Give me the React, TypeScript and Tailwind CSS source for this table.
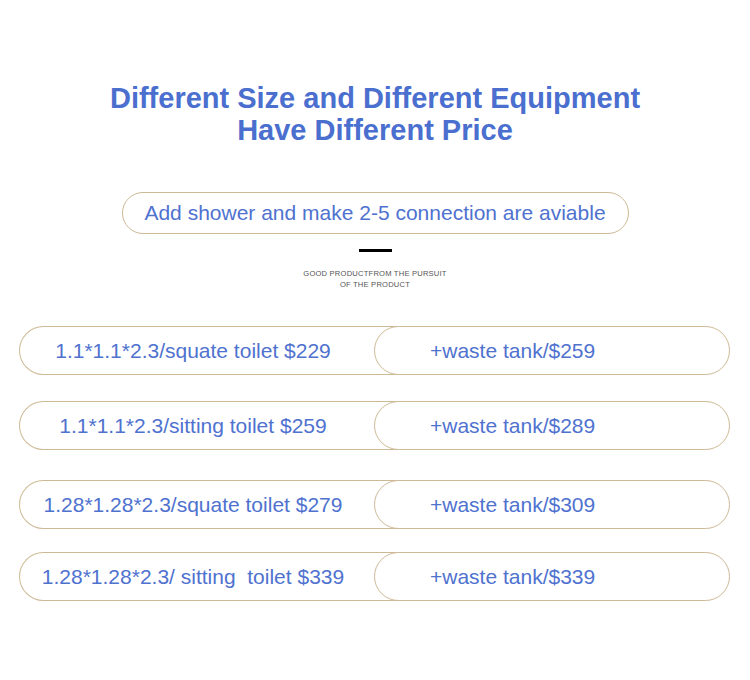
import React from "react";

const rows = [
  { left: "1.1*1.1*2.3/squate toilet $229", right: "+waste tank/$259", mt: "mt-[36px]" },
  { left: "1.1*1.1*2.3/sitting toilet $259", right: "+waste tank/$289", mt: "mt-[26px]" },
  { left: "1.28*1.28*2.3/squate toilet $279", right: "+waste tank/$309", mt: "mt-[30px]" },
  { left: "1.28*1.28*2.3/ sitting  toilet $339", right: "+waste tank/$339", mt: "mt-[23px]" },
];

export default function App() {
  return (
    <div
      className="w-[750px] h-[680px] bg-white flex flex-col items-center"
      style={{ fontFamily: '"Liberation Sans", Arial, sans-serif' }}
    >
      <h1 className="mt-[82px] text-center text-[29px] leading-[32px] font-bold text-[#4a6fcf]">
        Different Size and Different Equipment
        <br />
        Have Different Price
      </h1>
      <div className="mt-[46px] w-[507px] h-[42px] rounded-full border-[1.5px] border-[#cdb995] flex items-center justify-center text-[21px] text-[#4f72cf]">
        Add shower and make 2-5 connection are aviable
      </div>
      <div className="mt-[15px] w-[33px] h-[3px] bg-black" />
      <div className="mt-[16px] text-center text-[7.6px] leading-[11px] text-[#555] tracking-[0.2px]">
        GOOD PRODUCTFROM THE PURSUIT
        <br />
        OF THE PRODUCT
      </div>
      <div className="w-full flex flex-col">
        {rows.map((r, i) => (
          <div key={i} className={`${r.mt} flex pl-[19px]`}>
            <div className="w-[385px] h-[49px] shrink-0 rounded-l-full border-[1.5px] border-r-0 border-[#cdb995] flex items-center justify-center pr-[38px] text-[21px] text-[#4f72cf] whitespace-pre">
              {r.left}
            </div>
            <div className="relative -ml-[30px] w-[356px] h-[49px] shrink-0 rounded-full border-[1.5px] border-[#cdb995] bg-white flex items-center pl-[55px] text-[21px] text-[#4f72cf]">
              {r.right}
            </div>
          </div>
        ))}
      </div>
    </div>
  );
}
